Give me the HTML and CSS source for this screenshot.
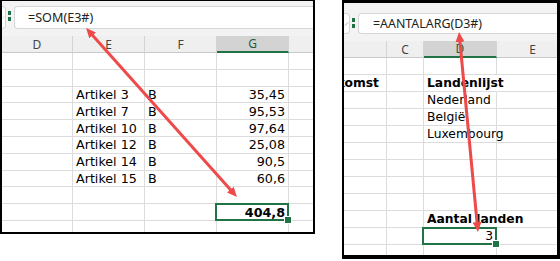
FILE: index.html
```html
<!DOCTYPE html>
<html lang="nl">
<head>
  <meta charset="UTF-8" />
  <title>Dynamische matrix</title>
  <link rel="stylesheet" href="styles.css">
</head>
<body>
  <div class="page">
    <div class="sheet sheet-left">
      <div class="fbar">
        <div class="fbar-btn"><svg width="6" height="8" viewBox="0 0 6 8"><path d="M1 5 L5 1" stroke="#9a9a9a" stroke-width="1" fill="none"/></svg></div>
        <div class="fbar-grip"><i></i><i></i></div>
        <div class="fbar-input">=SOM(E3#)</div>
      </div>
      <div class="grid" id="gridLinks"></div>
    </div>

    <div class="sheet sheet-right">
      <div class="fbar">
        <div class="fbar-btn"><svg width="6" height="8" viewBox="0 0 6 8"><path d="M1 6 L5 2" stroke="#9a9a9a" stroke-width="1" fill="none"/></svg></div>
        <div class="fbar-grip"><i></i><i></i></div>
        <div class="fbar-input">=AANTALARG(D3#)</div>
      </div>
      <div class="grid" id="gridRechts"></div>
    </div>

    <svg class="pijlen" width="560" height="261" viewBox="0 0 560 261">
      <defs>
        <marker id="punt" viewBox="0 0 10 9" refX="3" refY="4.5" markerWidth="10" markerHeight="9" markerUnits="userSpaceOnUse" orient="auto-start-reverse">
          <path d="M0 0 L10 4.5 L0 9 Z" fill="#ef4a4a"/>
        </marker>
      </defs>
      <line x1="90.7" y1="33.2" x2="232.3" y2="191.8" stroke="#ef4a4a" stroke-width="3" marker-start="url(#punt)" marker-end="url(#punt)"/>
      <line x1="459.7" y1="39" x2="477.3" y2="225" stroke="#ef4a4a" stroke-width="3" marker-start="url(#punt)" marker-end="url(#punt)"/>
    </svg>
  </div>

  <script>
    const artikelen = [
      ['Artikel 3', '35,45'],
      ['Artikel 7', '95,53'],
      ['Artikel 10', '97,64'],
      ['Artikel 12', '25,08'],
      ['Artikel 14', '90,5'],
      ['Artikel 15', '60,6']
    ];

    // kolom H valt buiten beeld, dus geen letter
    const links = {
      kolommen: ['D', 'E', 'F', 'G', ''],
      actief: 3,
      rijen: [
        [], [],
        ...artikelen.map(([naam, prijs]) => ['', naam, 'B', { t: prijs, cls: 'num' }]),
        [],
        ['', '', '', { t: '404,8', cls: 'num bold sel' }],
        []
      ]
    };

    const rechts = {
      kolommen: ['', 'C', 'D', 'E'],
      actief: 2,
      rijen: [
        [],
        [{ t: 'Herkomst', cls: 'bold clip' }, '', { t: 'Landenlijst', cls: 'bold spill' }],
        ['', '', 'Nederland'],
        ['', '', 'België'],
        ['', '', 'Luxembourg'],
        [], [], [], [],
        ['', '', { t: 'Aantal landen', cls: 'bold spill' }],
        ['', '', { t: '3', cls: 'num sel' }],
        []
      ]
    };

    function bouwGrid(id, blad) {
      const grid = document.getElementById(id);
      blad.kolommen.forEach((naam, i) => {
        const div = document.createElement('div');
        div.className = 'hdr' + (i === blad.actief ? ' hdr-actief' : '');
        div.textContent = naam;
        grid.appendChild(div);
      });
      blad.rijen.forEach((rij) => {
        blad.kolommen.forEach((_, i) => {
          const cel = rij[i] || '';
          const div = document.createElement('div');
          div.className = 'cel';
          if (typeof cel === 'string') {
            div.textContent = cel;
          } else {
            div.className += ' ' + cel.cls;
            div.innerHTML = `<span>${cel.t}</span>`;
          }
          grid.appendChild(div);
        });
      });
    }

    bouwGrid('gridLinks', links);
    bouwGrid('gridRechts', rechts);
  </script>
</body>
</html>
```

FILE: styles.css
```css
* {
  box-sizing: border-box;
  margin: 0;
  padding: 0;
}
body {
  background: #fff;
  font-family: 'DejaVu Sans', Verdana, sans-serif;
  color: #000;
}
.page {
  position: relative;
  width: 560px;
  height: 261px;
  display: flex;
  align-items: flex-start;
  gap: 27px;
}
.sheet {
  position: relative;
  overflow: hidden;
  background: #fff;
  border: solid #000;
}
.sheet-left {
  width: 315px;
  height: 234px;
  border-width: 1px 2px 2px 2px;
  font-size: 12.7px;
}
.sheet-right {
  width: 218px;
  height: 259px;
  border-width: 3px 3px 4px 2px;
  font-size: 12.3px;
}

/* formulebalk */
.fbar {
  display: flex;
  align-items: flex-start;
  background: #f3f3f3;
  height: 35px;
  padding-top: 5px;
}
.sheet-right .fbar {
  height: 38px;
  padding-top: 10px;
}
.fbar-btn {
  width: 4px;
  height: 23px;
  background: #fff;
  border: 1px solid #d6d6d6;
  border-left: none;
  border-radius: 0 4px 4px 0;
  overflow: hidden;
  display: flex;
  align-items: center;
  justify-content: flex-end;
}
.sheet-right .fbar-btn {
  width: 6px;
  height: 21px;
}
.fbar-grip {
  width: 3px;
  margin: 5px 3px 0 2px;
  display: flex;
  flex-direction: column;
  gap: 2px;
}
.fbar-grip i {
  display: block;
  width: 3px;
  height: 4px;
  background: #1e7145;
}
.fbar-input {
  flex: 1;
  height: 23px;
  background: #fff;
  border: 1px solid #d6d6d6;
  border-right: none;
  border-radius: 4px 0 0 4px;
  padding-left: 13px;
  font-family: 'Noto Sans', 'Open Sans', sans-serif;
  font-size: 12.6px;
  line-height: 21px;
  color: #222;
  white-space: nowrap;
}
.sheet-right .fbar-input {
  height: 21px;
  line-height: 19px;
  padding-left: 14px;
  font-size: 12.4px;
}

/* raster */
.grid {
  display: grid;
  grid-template-rows: 17px;
  grid-auto-rows: 16.8px;
}
#gridLinks {
  grid-template-columns: 71px 72px 72px 72px 72px;
}
#gridRechts {
  grid-template-columns: 43px 37px 73px 72px;
  grid-auto-rows: 17px;
}
.hdr {
  background: #efefef;
  border-right: 1px solid #d4d4d4;
  border-bottom: 1px solid #c9c9c9;
  font-family: 'Noto Sans', 'Open Sans', sans-serif;
  font-size: 12px;
  color: #444;
  display: flex;
  align-items: center;
  justify-content: center;
}
.hdr-actief {
  background: #d3d3d3;
  border-bottom: 2px solid #217346;
  color: #1c5c3a;
}
.cel {
  position: relative;
  border-right: 1px solid #dcdcdc;
  border-bottom: 1px solid #dcdcdc;
  padding: 0 3px;
  display: flex;
  align-items: center;
  white-space: nowrap;
}
.num {
  justify-content: flex-end;
}
.bold {
  font-weight: bold;
}
.spill {
  border-right-color: transparent;
}
.clip {
  justify-content: flex-end;
  overflow: hidden;
  padding-right: 7px;
}
.sel::after {
  content: '';
  position: absolute;
  top: -1px;
  left: -2px;
  right: -1px;
  bottom: -1px;
  border: 2px solid #217346;
  z-index: 2;
}
.sel::before {
  content: '';
  position: absolute;
  right: -4px;
  bottom: -4px;
  width: 6px;
  height: 6px;
  background: #217346;
  border: 1px solid #fff;
  z-index: 3;
}

.pijlen {
  position: absolute;
  top: 0;
  left: 0;
  z-index: 10;
  pointer-events: none;
}
```
